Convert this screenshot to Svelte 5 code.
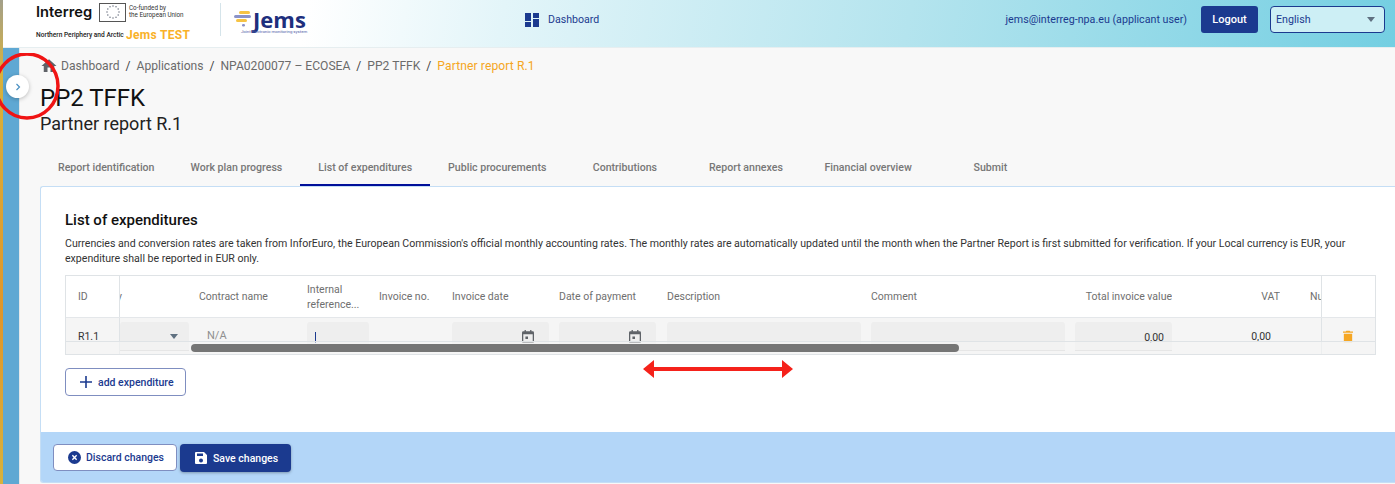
<script lang="ts">
	const tabs = ['Report identification', 'Work plan progress', 'List of expenditures', 'Public procurements', 'Contributions', 'Report annexes', 'Financial overview', 'Submit'];
	const crumbs = ['Applications', 'NPA0200077 – ECOSEA', 'PP2 TFFK'];
	const stars = Array.from({ length: 12 }, (_, i) => (i * Math.PI) / 6);
</script>

<div class="page">
	<header class="topbar">
		<div class="brand">
			<div class="interreg">
				<div class="line">
					<span class="wordmark">Interreg</span>
					<span class="flag">
						<svg width="16" height="16" viewBox="0 0 16 16">
							{#each stars as a}
								<circle cx={8 + 6 * Math.cos(a)} cy={8 + 6 * Math.sin(a)} r="0.75" fill="#6b7280" />
							{/each}
						</svg>
					</span>
					<span class="cofund">Co-funded by<br />the European Union</span>
				</div>
				<div class="line second">
					<span class="region">Northern Periphery and Arctic</span>
					<span class="test">Jems TEST</span>
				</div>
			</div>
			<span class="divider"></span>
			<div class="jems">
				<div class="jems-top">
					<svg width="18" height="16" viewBox="0 0 18 16">
						<rect x="5" y="0" width="11" height="3" rx="1.5" fill="#f6c344" />
						<rect x="0" y="4" width="17" height="3" rx="1.5" fill="#8b93c9" />
						<rect x="2" y="8" width="11" height="3" rx="1.5" fill="#f6c344" />
						<rect x="8" y="13" width="3" height="2.500" rx="1.200" fill="#8b93c9" />
					</svg>
					<span class="jems-name">Jems</span>
				</div>
				<span class="jems-sub">Joint electronic monitoring system</span>
			</div>
		</div>
		<nav class="topnav">
			<svg width="14" height="14" viewBox="0 0 14 14" fill="#1b3a8f">
				<rect x="0" y="0" width="6" height="8" />
				<rect x="8" y="0" width="6" height="5" />
				<rect x="0" y="9" width="6" height="5" />
				<rect x="8" y="6" width="6" height="8" />
			</svg>
			<span>Dashboard</span>
		</nav>
		<div class="user">
			<span class="email">jems@interreg-npa.eu (applicant user)</span>
			<button class="logout">Logout</button>
			<div class="lang"><span>English</span><i class="caret"></i></div>
		</div>
	</header>

	<div class="body">
		<aside class="rail"></aside>
		<main class="content">
			<nav class="breadcrumb">
				<svg class="home" width="18" height="18" viewBox="0 0 24 24" fill="#5f6368"><path d="M10 20v-6h4v6h5v-8h3L12 3 2 12h3v8z" /></svg>
				<span>Dashboard</span>
				{#each crumbs as c}
					<span class="sep">/</span><span>{c}</span>
				{/each}
				<span class="sep">/</span><span class="current">Partner report R.1</span>
			</nav>
			<h1>PP2 TFFK</h1>
			<h2>Partner report R.1</h2>

			<div class="tabs">
				{#each tabs as t, i}
					<div class="tab" class:active={i === 2}>{t}</div>
				{/each}
			</div>

			<section class="card">
				<div class="card-body">
					<h3>List of expenditures</h3>
					<p class="intro">Currencies and conversion rates are taken from InforEuro, the European Commission's official monthly accounting rates. The monthly rates are automatically updated until the month when the Partner Report is first submitted for verification. If your Local currency is EUR, your expenditure shall be reported in EUR only.</p>

					<div class="table">
						<div class="row head">
							<div class="cell id">ID</div>
							<div class="cell clip">y</div>
							<div class="cell">Contract name</div>
							<div class="cell two">Internal reference...</div>
							<div class="cell">Invoice no.</div>
							<div class="cell">Invoice date</div>
							<div class="cell">Date of payment</div>
							<div class="cell">Description</div>
							<div class="cell">Comment</div>
							<div class="cell right">Total invoice value</div>
							<div class="cell right">VAT</div>
							<div class="cell num">Nu</div>
							<div class="cell action"></div>
						</div>
						<div class="row data">
							<div class="cell id">R1.1</div>
							<div class="cell clip"><div class="field select"><i class="caret grey"></i></div></div>
							<div class="cell na">N/A</div>
							<div class="cell"><div class="field focus"><b class="cursor"></b></div></div>
							<div class="cell"></div>
							<div class="cell"><div class="field date">
								<svg width="12" height="13" viewBox="0 0 14 15" fill="#5f6368"><path d="M3 0h1.500v1.500h5V0H11v1.500h1.500A1.500 1.500 0 0 1 14 3v10.500a1.500 1.500 0 0 1-1.500 1.500h-11A1.500 1.500 0 0 1 0 13.500V3a1.500 1.500 0 0 1 1.500-1.500H3zM1.500 5v8.500h11V5zM4 7.500h3v3H4z" /></svg>
							</div></div>
							<div class="cell"><div class="field date">
								<svg width="12" height="13" viewBox="0 0 14 15" fill="#5f6368"><path d="M3 0h1.500v1.500h5V0H11v1.500h1.500A1.500 1.500 0 0 1 14 3v10.500a1.500 1.500 0 0 1-1.500 1.500h-11A1.500 1.500 0 0 1 0 13.500V3a1.500 1.500 0 0 1 1.500-1.500H3zM1.500 5v8.500h11V5zM4 7.500h3v3H4z" /></svg>
							</div></div>
							<div class="cell"><div class="field"></div></div>
							<div class="cell"><div class="field"></div></div>
							<div class="cell"><div class="field amount">0,00</div></div>
							<div class="cell right value">0,00</div>
							<div class="cell"></div>
							<div class="cell action">
								<svg width="10" height="13" viewBox="0 0 12 14" fill="#f5a623"><path d="M4 0h4l.7 1H12v1.600H0V1h3.300zM1 3.600h10V14H1z" /></svg>
							</div>
						</div>
						<div class="scrollbar"><div class="thumb"></div></div>
					</div>

					<button class="add">
						<svg width="12" height="12" viewBox="0 0 12 12" fill="#1b3a8f"><path d="M5.200 0h1.600v5.200H12v1.600H6.800V12H5.200V6.800H0V5.200h5.200z" /></svg>
						add expenditure
					</button>
				</div>
				<footer class="actions">
					<button class="discard">
						<svg width="13" height="13" viewBox="0 0 14 14"><circle cx="7" cy="7" r="7" fill="#1b3a8f" /><path d="M4.700 4.700l4.600 4.600M9.300 4.700l-4.600 4.600" stroke="#fff" stroke-width="1.500" /></svg>
						Discard changes
					</button>
					<button class="save">
						<svg width="12" height="12" viewBox="0 0 12 12" fill="#fff"><path d="M1 0h8l3 3v8a1 1 0 0 1-1 1H1a1 1 0 0 1-1-1V1a1 1 0 0 1 1-1zm1 1.500V4h6V1.500zM6 6.500a2 2 0 1 0 0 4 2 2 0 0 0 0-4z" /></svg>
						Save changes
					</button>
				</footer>
			</section>
		</main>
	</div>

	<div class="stripe"></div>
	<button class="expand" aria-label="Expand menu">
		<svg width="8" height="8" viewBox="0 0 8 8" fill="none" stroke="#4a90c2" stroke-width="1.200"><path d="M2.500 1l3 3-3 3" /></svg>
	</button>
	<svg class="circle" width="70" height="76" viewBox="0 0 70 76" fill="none"><ellipse cx="27" cy="33" rx="31" ry="32" stroke="#f01414" stroke-width="3.500" /></svg>
	<svg class="arrow" width="152" height="20" viewBox="0 0 152 20" fill="#f5221b"><path d="M1 10l11-9v7h128V1l11 9-11 9v-7H12v7z" /></svg>
</div>

<style>
	:global(body) {
		margin: 0;
		background: #f8f8f8;
	}

	.page {
		position: relative;
		width: 1395px;
		height: 484px;
		overflow: hidden;
		font-family: Roboto, "Liberation Sans", sans-serif;
		color: #1f1f1f;
	}

	.stripe {
		position: absolute;
		left: 0;
		top: 0;
		width: 3px;
		height: 100%;
		background: linear-gradient(#a3a08a, #d8b23c 15%, #e0962a 65%, #d8b23c);
	}

	.topbar {
		height: 48px;
		display: flex;
		align-items: center;
		padding: 0 0 8px 36px;
		background: linear-gradient(100deg, #ffffff 0%, #ffffff 22%, #e3f5f9 36%, #b4e4ee 65%, #74cfe2 100%);
		border-bottom: 1px solid #e6eef0;
		box-sizing: border-box;
	}

	.brand {
		display: flex;
		align-items: center;
		width: 489px;
	}

	.interreg {
		width: 184px;
		display: flex;
		flex-direction: column;
		margin-top: 5px;
	}

	.line {
		display: flex;
		align-items: center;
	}

	.wordmark {
		font-family: Inter, sans-serif;
		font-size: 14.700px;
		font-weight: 600;
		color: #111;
		width: 63px;
		white-space: nowrap;
	}

	.flag {
		width: 27px;
		height: 19px;
		box-sizing: border-box;
		border: 1px solid #555;
		display: flex;
		align-items: center;
		justify-content: center;
		margin-right: 3px;
		background: #fff;
	}

	.cofund {
		font-size: 6.300px;
		line-height: 7.500px;
		color: #333;
		white-space: nowrap;
	}

	.second {
		margin-top: 6px;
	}

	.region {
		font-size: 6.600px;
		font-weight: 500;
		color: #222;
		width: 90px;
		white-space: nowrap;
	}

	.test {
		font-size: 12px;
		font-weight: 700;
		color: #f9b128;
		letter-spacing: 0.3px;
		white-space: nowrap;
	}

	.divider {
		width: 1px;
		height: 33px;
		background: #d5e4ea;
		margin: 0 13px 0 0;
	}

	.jems {
		display: flex;
		flex-direction: column;
		align-items: flex-start;
		margin-top: 4px;
	}

	.jems-top {
		display: flex;
		align-items: center;
		gap: 1px;
	}

	.jems-name {
		font-family: "Open Sans", sans-serif;
		font-size: 22px;
		line-height: 21px;
		font-weight: 700;
		color: #1e2f7d;
	}

	.jems-sub {
		margin: -1px 0 0 7px;
		font-size: 4.300px;
		line-height: 6px;
		color: #5060a8;
		white-space: nowrap;
	}

	.topnav {
		display: flex;
		align-items: center;
		gap: 9px;
		font-size: 10.600px;
		color: #1b3a8f;
	}

	.user {
		margin-left: auto;
		display: flex;
		align-items: center;
		padding-right: 10px;
		font-size: 10.700px;
		color: #1b3a8f;
	}

	.logout {
		margin-left: 14px;
		width: 57px;
		height: 27px;
		border: none;
		border-radius: 3px;
		background: #1b3a8f;
		color: #fff;
		font: 500 11px Roboto, sans-serif;
	}

	.lang {
		margin-left: 12px;
		width: 115px;
		height: 27px;
		box-sizing: border-box;
		border: 1.500px solid #1b3a8f;
		border-radius: 4px;
		padding: 0 9px 0 5px;
		display: flex;
		align-items: center;
		justify-content: space-between;
		background: #cdeff5;
	}

	.caret {
		width: 0;
		height: 0;
		border-left: 4px solid transparent;
		border-right: 4px solid transparent;
		border-top: 5px solid #5f7080;
	}

	.body {
		display: flex;
		height: 436px;
	}

	.rail {
		width: 20px;
		flex: none;
		box-sizing: border-box;
		background: #5fa8d3;
		border-right: 1px solid #e4e8ea;
	}

	.content {
		flex: 1;
		min-width: 0;
		padding: 9px 0 0 20px;
	}

	.breadcrumb {
		display: flex;
		align-items: center;
		height: 18px;
		font-size: 12.100px;
		color: #6b6b6b;
		white-space: nowrap;
	}

	.home {
		margin-right: 3px;
	}

	.sep {
		margin: 0 6px;
		color: #444;
	}

	.current {
		color: #f5a623;
		letter-spacing: 0.1px;
	}

	h1 {
		margin: 7px 0 0;
		font-size: 24px;
		line-height: 32px;
		font-weight: 400;
		color: #111;
	}

	h2 {
		margin: -1px 0 0;
		font-size: 18px;
		line-height: 22px;
		font-weight: 400;
		color: #222;
	}

	.tabs {
		display: flex;
		margin-top: 14px;
		height: 37px;
	}

	.tab {
		box-sizing: border-box;
		min-width: 121px;
		padding: 0 18px;
		display: flex;
		align-items: center;
		justify-content: center;
		font-size: 10.600px;
		font-weight: 500;
		color: #777;
		white-space: nowrap;
	}

	.tab.active {
		border-bottom: 2px solid #00109a;
		padding-top: 2px;
	}

	.card {
		height: 297px;
		border: 1px solid #c5def5;
		border-right: none;
		border-radius: 3px 0 0 3px;
		background: #fff;
		box-sizing: border-box;
		display: flex;
		flex-direction: column;
		overflow: hidden;
	}

	.card-body {
		flex: 1;
		padding: 24px 0 0 24px;
	}

	h3 {
		margin: 0;
		font-size: 15px;
		line-height: 18px;
		font-weight: 500;
		color: #111;
	}

	.intro {
		margin: 7px 0 0;
		width: 1312px;
		font-size: 10.590px;
		line-height: 15px;
		color: #333;
	}

	.table {
		position: relative;
		margin-top: 9px;
		width: 1311px;
		height: 80px;
		box-sizing: border-box;
		border: 1px solid #dfe3e6;
		overflow: hidden;
	}

	.row {
		display: grid;
		grid-template-columns: 54px 69px 108px 72px 73px 107px 108px 204px 204px 107px 108px 41px 54px;
		font-size: 10.500px;
		color: #6f6f6f;
	}

	.head {
		height: 42px;
		align-items: center;
		border-bottom: 1px solid #e4e7ea;
		box-sizing: border-box;
	}

	.data {
		height: 37px;
		background: #f5f5f5;
		color: #333;
		overflow: hidden;
	}

	.cell {
		box-sizing: border-box;
		padding-left: 10px;
		min-width: 0;
		overflow: hidden;
		white-space: nowrap;
	}

	.cell.id {
		padding-left: 12px;
		border-right: 1px solid #dfe3e6;
		height: 100%;
		display: flex;
		align-items: center;
	}

	.cell.clip {
		padding-left: 0;
	}

	.head .clip {
		text-indent: -3px;
	}

	.two {
		white-space: normal;
		line-height: 15px;
		padding-right: 0;
	}

	.right {
		text-align: right;
	}

	.num {
		padding-left: 30px;
	}

	.action {
		border-left: 1px solid #dfe3e6;
		height: 100%;
		display: flex;
		padding: 12px 0 0 21px;
	}

	.data .cell {
		height: 37px;
	}

	.data .id {
		padding-bottom: 0;
		padding-top: 0;
		align-items: flex-start;
		line-height: 37px;
	}

	.field {
		height: 29px;
		width: 100%;
		background: #eeeeee;
		border-radius: 3px 3px 0 0;
		border-bottom: 1px solid #d0d0d0;
		box-sizing: border-box;
		position: relative;
		margin-top: 4px;
	}

	.select .caret {
		position: absolute;
		right: 11px;
		top: 12px;
	}

	.na {
		padding: 11px 0 0 18px;
		color: #8f8f8f;
		font-size: 11px;
	}

	.focus {
		width: 62px;
		border-bottom-color: #7d88b5;
	}

	.cursor {
		position: absolute;
		left: 8px;
		top: 10px;
		width: 1px;
		height: 11px;
		background: #1b3a8f;
	}

	.date {
		width: 97px;
		display: flex;
		justify-content: flex-end;
		padding: 8px 15px 0 0;
	}

	.amount {
		width: 97px;
		text-align: right;
		padding: 9px 8px 0 0;
		color: #333;
	}

	.value {
		padding: 12px 9px 0 0;
	}

	.scrollbar {
		position: absolute;
		left: 0;
		right: 0;
		bottom: 0;
		height: 13px;
		background: rgba(245, 245, 245, 0.6);
		border-top: 1px solid #dfe3e6;
		box-sizing: border-box;
	}

	.thumb {
		position: absolute;
		left: 125px;
		top: 2px;
		width: 768px;
		height: 8px;
		border-radius: 4px;
		background: #757575;
	}

	.add {
		display: flex;
		align-items: center;
		gap: 6px;
		margin-top: 13px;
		width: 121px;
		height: 28px;
		padding: 0 0 0 14px;
		box-sizing: border-box;
		border: 1px solid #7f8ec0;
		border-radius: 4px;
		background: #fff;
		color: #1b3a8f;
		font: 500 10.500px Roboto, sans-serif;
	}

	.actions {
		height: 50px;
		background: #b3d6f8;
		display: flex;
		align-items: flex-start;
		gap: 3px;
		padding: 12px 0 0 12px;
		box-sizing: border-box;
	}

	.actions button {
		display: flex;
		align-items: center;
		border-radius: 4px;
		font: 500 10.500px Roboto, sans-serif;
		box-sizing: border-box;
	}

	.discard {
		width: 124px;
		height: 27px;
		padding: 0 0 0 14px;
		gap: 5px;
		background: #fff;
		border: 1px solid #7f8ec0;
		color: #1b3a8f;
	}

	.save {
		width: 111px;
		height: 28px;
		padding: 0 0 0 15px;
		gap: 6px;
		background: #1b3a8f;
		border: none;
		color: #fff;
		box-shadow: 0 1px 3px rgba(0, 0, 0, 0.3);
	}

	.expand {
		position: absolute;
		left: 6px;
		top: 75px;
		width: 23px;
		height: 23px;
		padding: 0;
		border: none;
		border-radius: 50%;
		background: #fff;
		box-shadow: 0 1px 4px rgba(0, 0, 0, 0.25);
		display: flex;
		align-items: center;
		justify-content: center;
	}

	.circle {
		position: absolute;
		left: 0;
		top: 53px;
	}

	.arrow {
		position: absolute;
		left: 642px;
		top: 359px;
	}
</style>
